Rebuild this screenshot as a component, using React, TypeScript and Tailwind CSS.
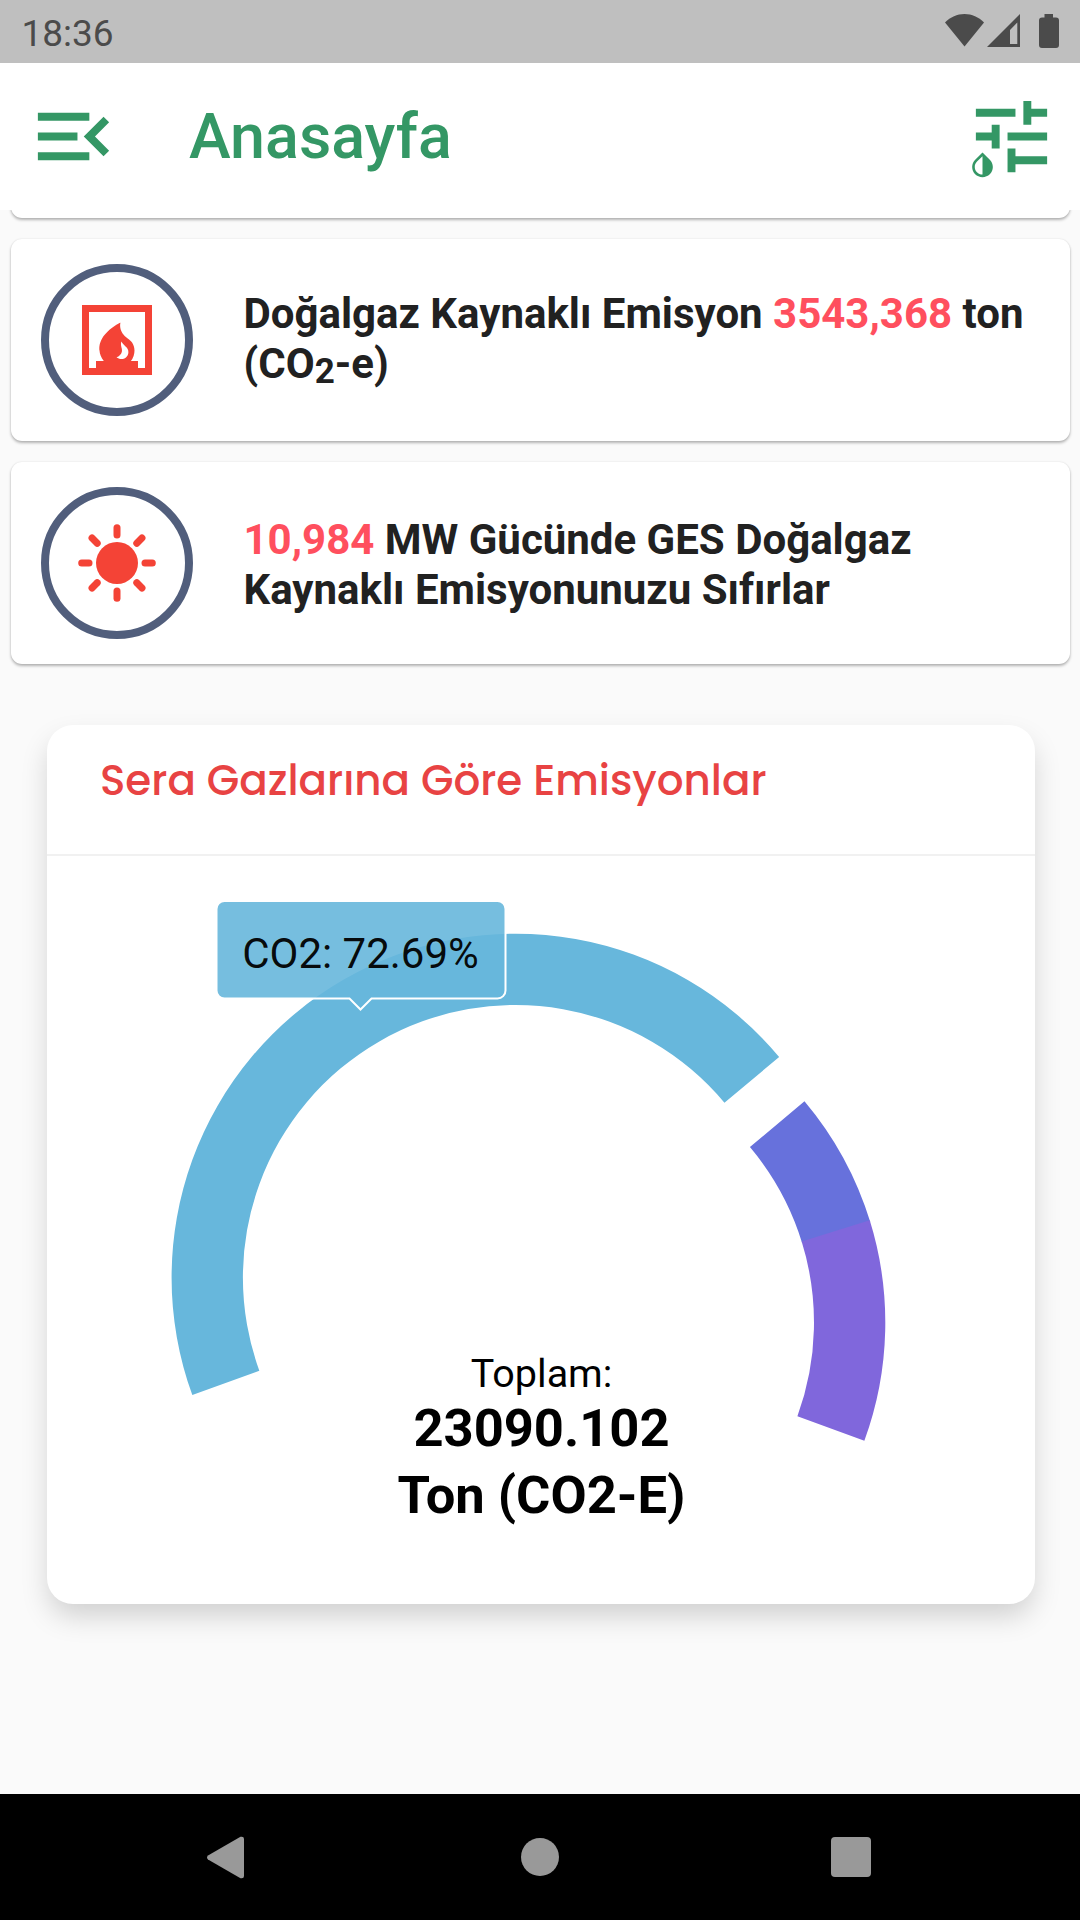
import type { ReactNode } from "react";
import { MdFireplace, MdInvertColors, MdMenuOpen } from "react-icons/md";

const CENTER = { x: 494.5, y: 466.6 };
const OUTER = 343.8;
const INNER = 272.5;

// angles in degrees, counter-clockwise from the x axis
// the first small slice runs a little under the next one so no seam shows
const slices = [
  { name: "CO2", from: 200, to: 39.9, color: "#67b7dc", dx: -26.1, dy: -45.1 },
  { name: "CH4", from: 40.1, to: 17, color: "#6771dc", dx: 0, dy: 0 },
  { name: "N2O", from: 17.3, to: -20.1, color: "#8067dc", dx: 0, dy: 0 },
];

function point(r: number, deg: number, dx: number, dy: number) {
  const a = (deg * Math.PI) / 180;
  return `${(CENTER.x + dx + r * Math.cos(a)).toFixed(2)} ${(CENTER.y + dy - r * Math.sin(a)).toFixed(2)}`;
}

function arc({ from, to, dx, dy }: (typeof slices)[number]) {
  return [
    `M${point(OUTER, from, dx, dy)}`,
    `A${OUTER} ${OUTER} 0 0 1 ${point(OUTER, to, dx, dy)}`,
    `L${point(INNER, to, dx, dy)}`,
    `A${INNER} ${INNER} 0 0 0 ${point(INNER, from, dx, dy)}Z`,
  ].join("");
}

function StatusBar() {
  return (
    <div className="flex h-[63px] shrink-0 items-center justify-between bg-[#bfbfbf] pr-[21px] pl-[21.500px] text-[#4b4b4b]">
      <span className="pt-[3px] text-[37px] leading-none">18:36</span>
      <svg width="114" height="34" viewBox="0 0 114 34" fill="currentColor" className="-mt-px">
        <path d="M0 8.5C5.500 3 12 0 19.500 0S33.500 3 39 8.500L19.500 32.500Z" />
        <path d="M42 33 75 0v33ZM72.300 8.500 65 16v14h7.300Z" fillRule="evenodd" />
        <path d="M99.500 0h8.500v3.500h3a3 3 0 0 1 3 3V31a3 3 0 0 1-3 3H97a3 3 0 0 1-3-3V6.500a3 3 0 0 1 3-3h2.500Z" />
      </svg>
    </div>
  );
}

function AppBar() {
  return (
    <header className="flex h-[147px] shrink-0 items-center bg-white pr-[21px] pl-[26px] text-[#349765]">
      <MdMenuOpen size={95} />
      <h1 className="ml-[68px] pt-[2px] text-[62.800px] leading-none font-medium">Anasayfa</h1>
      <div className="relative ml-auto size-[95px]">
        <svg width="95" height="95" viewBox="0 0 24 24" fill="currentColor">
          <path d="M3 5v2h10V5H3zm10 16v-2h8v-2h-8v-2h-2v6h2zM7 9v2H3v2h4v2h2V9H7zm14 4v-2H11v2h10zm-6-4h2V7h4V5h-4V3h-2v6z" />
        </svg>
        <MdInvertColors size={31} className="absolute top-[61px] left-[3px]" />
      </div>
    </header>
  );
}

function InfoCard({ icon, children }: { icon: ReactNode; children: ReactNode }) {
  return (
    <div className="flex h-[202px] items-center rounded-[11px] bg-white pl-[30px] shadow-[0_2px_3px_rgba(0,0,0,0.28),0_0_2px_rgba(0,0,0,0.1)]">
      <div className="flex size-[152px] shrink-0 items-center justify-center rounded-full border-8 border-[#515e7c] text-[#f44336]">
        {icon}
      </div>
      <div className="ml-[51px] text-[42px] leading-[50px] font-bold whitespace-nowrap text-[#212121]">{children}</div>
    </div>
  );
}

function SunIcon() {
  return (
    <svg width="80" height="80" viewBox="-40 -40 80 80" fill="currentColor">
      <circle r="21" />
      {[0, 45, 90, 135, 180, 225, 270, 315].map((deg) => (
        <path
          key={deg}
          d="M0-28V-35.300"
          transform={`rotate(${deg})`}
          stroke="currentColor"
          strokeWidth="7"
          strokeLinecap="round"
        />
      ))}
    </svg>
  );
}

function EmissionChart() {
  return (
    <svg width="988" height="748" viewBox="0 0 988 748" className="block">
      {slices.map((slice) => (
        <path key={slice.name} d={arc(slice)} fill={slice.color} />
      ))}
      <g textAnchor="middle" fill="#000">
        <text x="494.500" y="530.500" fontSize="39.500">
          Toplam:
        </text>
        <text x="494.500" y="590" fontSize="52.500" fontWeight="700">
          23090.102
        </text>
        <text x="494.500" y="656.500" fontSize="52.500" fontWeight="700">
          Ton (CO2-E)
        </text>
      </g>
      <path
        d="M177.500 45H450.500a8 8 0 0 1 8 8V134.500a8 8 0 0 1-8 8H324.500L313.500 153.500 302.500 142.500H177.500a8 8 0 0 1-8-8V53a8 8 0 0 1 8-8Z"
        fill="#67b7dc"
        fillOpacity="0.9"
        stroke="#fff"
        strokeWidth="2"
      />
      <text x="313.500" y="111.500" fontSize="42" textAnchor="middle" fill="#000" fillOpacity="0.95">
        CO2: 72.69%
      </text>
    </svg>
  );
}

function NavBar() {
  return (
    <nav className="flex h-[126px] shrink-0 items-center justify-between bg-black pr-[209px] pl-[207px]">
      <svg width="38" height="43" viewBox="0 0 38 43" fill="#999">
        <path d="M1 19.500 33.500.800Q37 0 37 3V40Q37 43 33.500 42.200L1 23.500Q-1 21.500 1 19.500Z" />
      </svg>
      <div className="ml-[3px] size-[38px] rounded-full bg-[#999]" />
      <div className="size-10 rounded-[4px] bg-[#999]" />
    </nav>
  );
}

export default function App() {
  return (
    <div className="flex h-[1920px] w-[1080px] flex-col overflow-hidden bg-[#fafafa] font-[Roboto,sans-serif]">
      <StatusBar />
      <AppBar />
      <main className="flex-1 overflow-hidden">
        <div className="pr-[10.500px] pl-[10.500px]">
          <div className="-mt-[194px] flex flex-col gap-[21px]">
            <div className="h-[202px] rounded-[11px] bg-white shadow-[0_2px_3px_rgba(0,0,0,0.28),0_0_2px_rgba(0,0,0,0.1)]" />
            <InfoCard icon={<MdFireplace size={84} />}>
              <p className="mb-[2px]">
                Doğalgaz Kaynaklı Emisyon <span className="text-[#ff4f5e]">3543,368</span> ton
                <br />
                (CO
                <span className="relative top-[5px] text-[35px] leading-none">2</span>
                -e)
              </p>
            </InfoCard>
            <InfoCard icon={<SunIcon />}>
              <p className="mt-[4px]">
                <span className="text-[#ff4f5e]">10,984</span> MW Gücünde GES Doğalgaz
                <br />
                Kaynaklı Emisyonunuzu Sıfırlar
              </p>
            </InfoCard>
          </div>
        </div>
        <section className="mt-[61px] ml-[47px] w-[988px] rounded-[26px] bg-white shadow-[0_14px_28px_-2px_rgba(0,0,0,0.17)]">
          <h2 className="h-[131px] border-b-2 border-[#f1f1f1] pt-[31px] pl-[53px] font-[Poppins,Inter,sans-serif] text-[42px] leading-[50px] font-medium whitespace-nowrap text-[#e84343] [font-feature-settings:'cv11']">
            Sera Gazlarına Göre Emisyonlar
          </h2>
          <EmissionChart />
        </section>
      </main>
      <NavBar />
    </div>
  );
}
